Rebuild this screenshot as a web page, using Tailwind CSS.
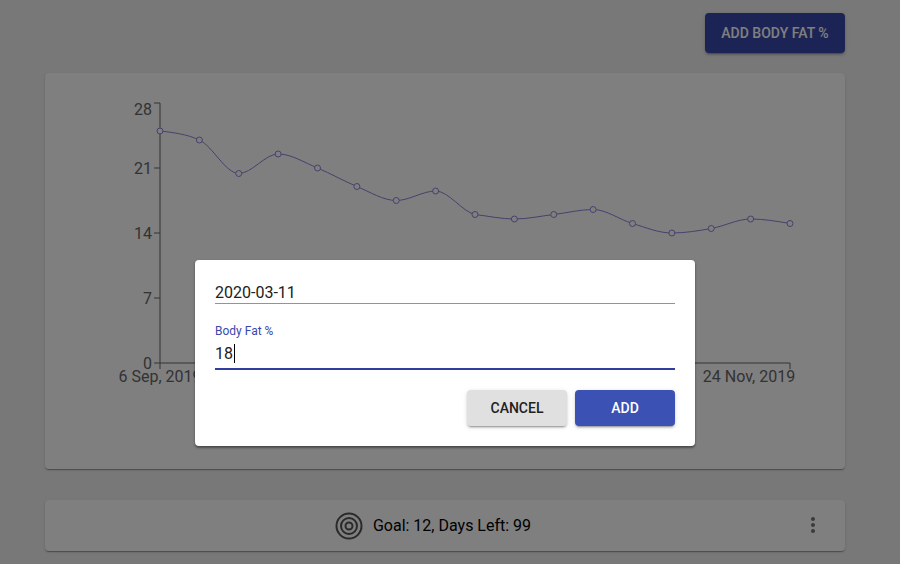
<!DOCTYPE html>
<html>
<head>
<meta charset="utf-8">
<script src="https://cdn.jsdelivr.net/npm/@tailwindcss/browser@4"></script>
</head>
<body class="relative h-[564px] w-[900px] overflow-hidden bg-[#f0f0f0] font-['Roboto',sans-serif]">
  <main class="w-[890px] px-[45px] pt-[13px]">
    <div class="flex justify-end">
      <button class="h-10 w-[140px] rounded bg-[#3949ab] text-sm font-medium text-white shadow-[0_3px_1px_-2px_rgba(0,0,0,0.2),0_2px_2px_0_rgba(0,0,0,0.14),0_1px_5px_0_rgba(0,0,0,0.12)]">ADD BODY FAT %</button>
    </div>
    <section class="mt-5 h-[396px] rounded bg-white shadow-[0_2px_1px_-1px_rgba(0,0,0,0.2),0_1px_1px_0_rgba(0,0,0,0.14),0_1px_3px_0_rgba(0,0,0,0.12)]">
      <svg width="800" height="396" viewBox="45 73 800 396" class="block">
        <g stroke="#666" fill="none" stroke-width="1">
          <path d="M160 103V363M154 103H160M154 168H160M154 233H160M154 298H160M154 363H790M160 363V369M790 363V369"/>
        </g>
        <g fill="#666" font-size="16" font-family="Roboto" text-anchor="end">
          <text x="152" y="115">28</text>
          <text x="152" y="174">21</text>
          <text x="152" y="239">14</text>
          <text x="152" y="304">7</text>
          <text x="152" y="369">0</text>
        </g>
        <g fill="#666" font-size="16" font-family="Roboto" text-anchor="middle">
          <text x="160" y="382">6 Sep, 2019</text>
          <text x="749" y="382">24 Nov, 2019</text>
        </g>
        <path fill="none" stroke="#8884d8" stroke-width="1" d="M160,131C173.125,132.5 186.25,134 199.375,140C212.5,146 225.625,173.5 238.75,173.5C251.875,173.5 265,154 278.125,154C291.25,154 304.375,162.58 317.5,168C330.625,173.42 343.75,181.08 356.875,186.5C370,191.92 383.125,200.5 396.25,200.5C409.375,200.5 422.5,191 435.625,191C448.75,191 461.875,211.5 475,214.5C488.125,216 501.25,219 514.375,219C527.5,219 540.625,216.08 553.75,214.5C566.875,212.92 580,209.5 593.125,209.5C606.25,209.5 619.375,219.58 632.5,223.5C645.625,227.42 658.75,233 671.875,233C685,233 698.125,230.83 711.25,228.5C724.375,226.17 737.5,219 750.625,219C763.75,219 776.875,221.25 790,223.5"/>
        <g fill="#fff" stroke="#8884d8" stroke-width="1">
          <circle cx="160" cy="131" r="3"/><circle cx="199.375" cy="140" r="3"/><circle cx="238.75" cy="173.5" r="3"/><circle cx="278.125" cy="154" r="3"/><circle cx="317.5" cy="168" r="3"/><circle cx="356.875" cy="186.5" r="3"/><circle cx="396.25" cy="200.5" r="3"/><circle cx="435.625" cy="191" r="3"/><circle cx="475" cy="214.5" r="3"/><circle cx="514.375" cy="219" r="3"/><circle cx="553.75" cy="214.5" r="3"/><circle cx="593.125" cy="209.5" r="3"/><circle cx="632.5" cy="223.5" r="3"/><circle cx="671.875" cy="233" r="3"/><circle cx="711.25" cy="228.5" r="3"/><circle cx="750.625" cy="219" r="3"/><circle cx="790" cy="223.5" r="3"/>
        </g>
      </svg>
    </section>
    <section class="relative mt-[31px] flex h-[51px] items-center justify-center rounded bg-white pr-6 shadow-[0_2px_1px_-1px_rgba(0,0,0,0.2),0_1px_1px_0_rgba(0,0,0,0.14),0_1px_3px_0_rgba(0,0,0,0.12)]">
      <svg width="28" height="28" viewBox="0 0 28 28" fill="none" stroke="#555" stroke-width="2" class="mr-[10px]">
        <circle cx="14" cy="14" r="12.5"/><circle cx="14" cy="14" r="8"/><circle cx="14" cy="14" r="3.5"/>
      </svg>
      <span class="text-base text-black">Goal: 12, Days Left: 99</span>
      <svg width="24" height="24" viewBox="0 0 24 24" fill="#757575" class="absolute right-5 top-[13px]">
        <path d="M12 8c1.1 0 2-.9 2-2s-.9-2-2-2-2 .9-2 2 .9 2 2 2zm0 2c-1.1 0-2 .9-2 2s.9 2 2 2 2-.9 2-2-.9-2-2-2zm0 6c-1.1 0-2 .9-2 2s.9 2 2 2 2-.9 2-2-.9-2-2-2z"/>
      </svg>
    </section>
  </main>

  <div class="absolute inset-0 bg-black/50"></div>

  <div class="absolute left-[195px] top-[260px] flex h-[186px] w-[500px] flex-col rounded bg-white px-5 shadow-[0_2px_2px_0_rgba(0,0,0,0.3),0_1px_3px_0_rgba(0,0,0,0.2)]">
    <div class="mt-[21px] h-[23px] border-b border-[#949494] text-base leading-[23px] text-[#212121]">2020-03-11</div>
    <label class="mt-[20px] text-xs leading-[14px] text-[#3949ab]">Body Fat %</label>
    <div class="mt-[3px] flex h-[29px] items-start border-b-2 border-[#303f9f] text-base leading-[25px] text-[#212121]">18<span class="ml-px mt-[3px] h-[19px] w-px bg-black"></span></div>
    <div class="mt-[20px] flex justify-end gap-2">
      <button class="h-9 w-[100px] rounded bg-[#e0e0e0] text-sm font-medium text-[#212121] shadow-[0_3px_1px_-2px_rgba(0,0,0,0.2),0_2px_2px_0_rgba(0,0,0,0.14),0_1px_5px_0_rgba(0,0,0,0.12)]">CANCEL</button>
      <button class="h-9 w-[100px] rounded bg-[#3b51b3] text-sm font-medium text-white shadow-[0_3px_1px_-2px_rgba(0,0,0,0.2),0_2px_2px_0_rgba(0,0,0,0.14),0_1px_5px_0_rgba(0,0,0,0.12)]">ADD</button>
    </div>
  </div>
</body>
</html>
